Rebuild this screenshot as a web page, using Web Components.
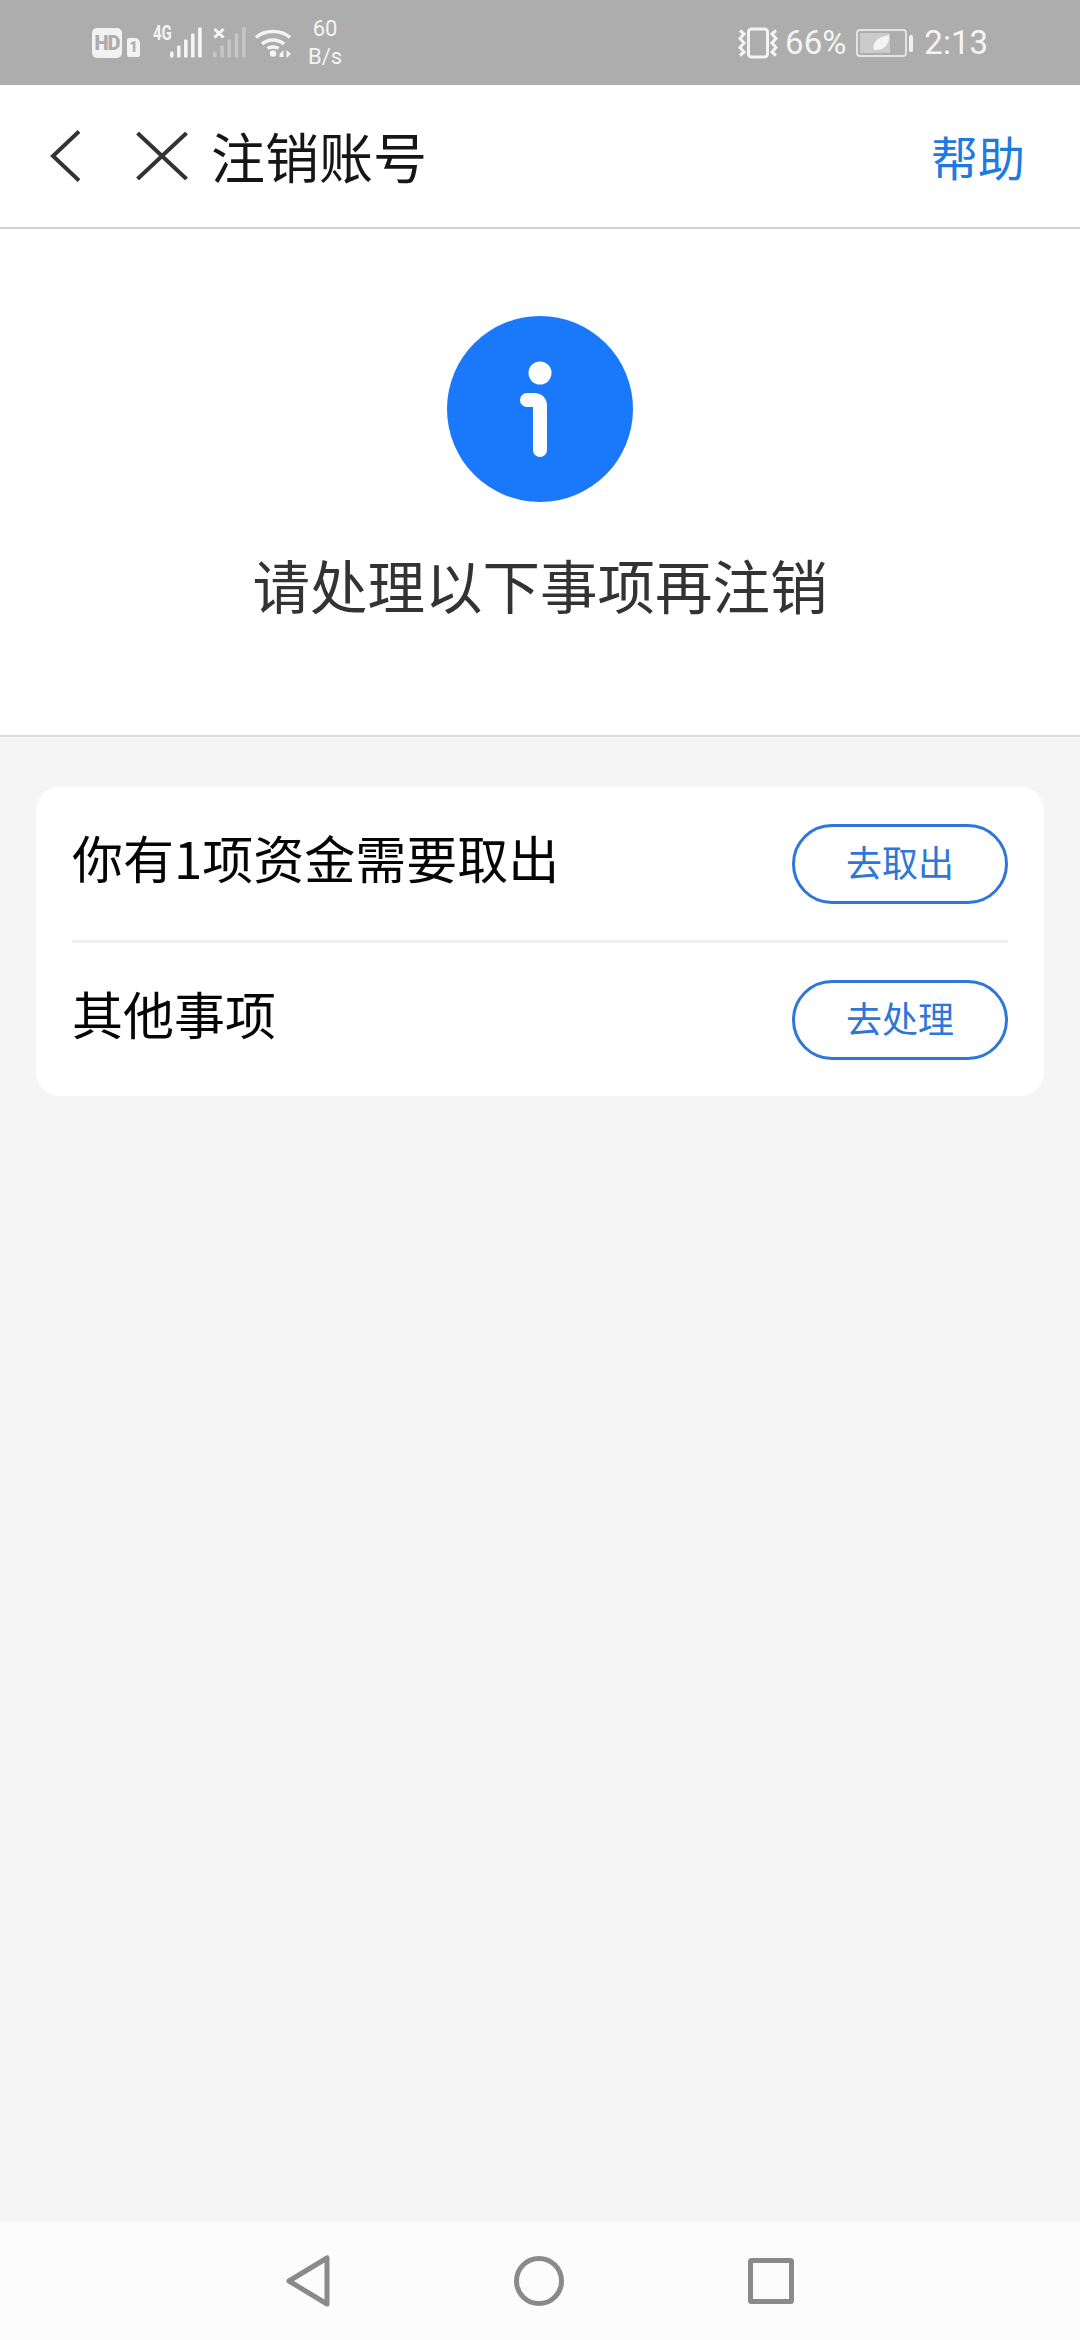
<!DOCTYPE html>
<html lang="zh">
<head>
<meta charset="utf-8">
<title>注销账号</title>
<style>
  html, body { margin: 0; padding: 0; }
  body { font-family: "Noto Sans CJK SC", "Liberation Sans", sans-serif; }
</style>
</head>
<body>
<account-page>
  <status-bar slot="status"></status-bar>
  <app-bar slot="header" heading="注销账号" action="帮助"></app-bar>
  <notice-hero slot="hero">请处理以下事项再注销</notice-hero>
  <todo-card slot="content">
    <todo-row action="去取出">你有1项资金需要取出</todo-row>
    <todo-row action="去处理" last>其他事项</todo-row>
  </todo-card>
  <nav-bar slot="nav"></nav-bar>
</account-page>

<script>
// Page shell
class AccountPage extends HTMLElement {
  constructor() {
    super();
    this.attachShadow({ mode: 'open' }).innerHTML = /*html*/`
      <style>
        :host {
          display: flex;
          flex-direction: column;
          width: 1080px;
          height: 2340px;
          overflow: hidden;
          background: #f5f5f5;
        }
        .content { flex: 1; padding: 50px 36px 0; }
      </style>
      <slot name="status"></slot>
      <slot name="header"></slot>
      <slot name="hero"></slot>
      <div class="content"><slot name="content"></slot></div>
      <slot name="nav"></slot>
    `;
  }
}

class StatusBar extends HTMLElement {
  constructor() {
    super();
    this.attachShadow({ mode: 'open' }).innerHTML = /*html*/`
      <style>
        :host {
          display: flex;
          align-items: center;
          height: 85px;
          padding: 0 92px 0 92px;
          box-sizing: border-box;
          background: #adadad;
          color: #f4f4f4;
          font-family: Roboto, "Liberation Sans", sans-serif;
        }
        svg { display: block; flex: none; }
        .hd {
          display: flex;
          align-items: center;
          justify-content: center;
          width: 30px;
          height: 30px;
          border-radius: 5px;
          background: #f2f2f2;
          color: #adadad;
          font-size: 20px;
          font-weight: 900;
          letter-spacing: -1px;
        }
        .sim {
          display: flex;
          align-items: center;
          justify-content: center;
          width: 13px;
          height: 19px;
          margin: 9px 0 0 5px;
          border-radius: 2px 5px 2px 2px;
          background: #f2f2f2;
          color: #adadad;
          font-size: 14px;
          font-weight: 900;
        }
        .net {
          align-self: flex-start;
          width: 19px;
          margin: 23px 0 0 13px;
          font-size: 20px;
          line-height: 20px;
          font-weight: 700;
          transform: scaleX(.75);
          transform-origin: left;
        }
        .speed {
          width: 50px;
          margin-left: 8px;
          font-size: 22px;
          line-height: 28px;
          text-align: center;
        }
        .pct { margin-left: 7px; font-size: 33px; }
        .time { margin-left: 10px; font-size: 33px; }
        .grow { flex: 1; }
      </style>
      <div class="hd">HD</div>
      <div class="sim">1</div>
      <div class="net">4G</div>
      <svg width="32" height="32" viewBox="0 0 32 32" fill="#f4f4f4" style="margin-left:-2px">
        <rect x="0" y="24.500" width="3.600" height="6" rx="1.500"/>
        <rect x="7" y="18.500" width="3.600" height="12" rx=".8"/>
        <rect x="14" y="12.500" width="3.600" height="18" rx=".8"/>
        <rect x="21" y="6.500" width="3.600" height="24" rx=".8"/>
        <rect x="28" y=".5" width="3.800" height="30" rx=".8"/>
      </svg>
      <svg width="34" height="32" viewBox="0 0 34 32" style="margin-left:10px">
        <path d="M2.500 2 11.500 10.500M11.500 2 2.500 10.500" stroke="#f4f4f4" stroke-width="3"/>
        <g fill="#f4f4f4" opacity=".35">
          <rect x="1" y="24.500" width="3.600" height="6" rx="1.500"/>
          <rect x="8.300" y="18.500" width="3.600" height="12" rx=".8"/>
          <rect x="15.500" y="12.500" width="3.600" height="18" rx=".8"/>
          <rect x="22.700" y="6.500" width="3.600" height="24" rx=".8"/>
          <rect x="30" y=".5" width="3.800" height="30" rx=".8"/>
        </g>
      </svg>
      <svg width="38" height="32" viewBox="0 0 38 32" fill="none" stroke="#f4f4f4" stroke-width="3.500" style="margin-left:8px">
        <path d="M2 10.500C11 2.500 27 2.500 36 10.500"/>
        <path d="M8 17C14 11.500 24 11.500 30 17"/>
        <circle cx="19" cy="26.500" r="3.200" fill="#f4f4f4" stroke="none"/>
        <path d="M13.500 21.500C16 19.500 22 19.500 24.500 21.500"/>
        <path d="M25.500 27l4-4v7H25.500zM32.500 23l4.500 4-4.500 4z" fill="#f4f4f4" stroke="none"/>
      </svg>
      <div class="speed">60<br>B/s</div>
      <div class="grow"></div>
      <svg width="40" height="32" viewBox="0 0 40 32" fill="none" stroke="#f4f4f4">
        <rect x="10.500" y="2" width="19" height="28" rx="3" stroke-width="3"/>
        <path d="M2 3.500l4 3.500-4 4.500 4 4.500-4 4.500 4 4.500-4 3.500M38 3.500l-4 3.500 4 4.500-4 4.500 4 4.500-4 4.500 4 3.500" stroke-width="3"/>
      </svg>
      <div class="pct">66%</div>
      <svg width="58" height="28" viewBox="0 0 58 28" style="margin-left:10px">
        <rect x="1" y="1" width="49" height="26" rx="3" fill="none" stroke="#e4e4e4" stroke-width="2"/>
        <rect x="4" y="4" width="30" height="20" fill="#cbcbcb"/>
        <rect x="53" y="6" width="4" height="17" rx="1.500" fill="#f0f0f0"/>
        <path d="M18 21C16 15 20 8 33 6C34 15 28 22 18 21Z" fill="#f4f4f4"/>
      </svg>
      <div class="time">2:13</div>
    `;
  }
}

class AppBar extends HTMLElement {
  constructor() {
    super();
    this.attachShadow({ mode: 'open' }).innerHTML = /*html*/`
      <style>
        :host {
          display: flex;
          align-items: center;
          height: 144px;
          padding: 0 55px 0 50px;
          box-sizing: border-box;
          background: #fff;
          border-bottom: 2px solid #d2d2d2;
        }
        svg { display: block; flex: none; }
        h1 {
          flex: 1;
          margin: 0 0 0 23px;
          color: #161616;
          font-size: 54px;
          font-weight: 400;
          line-height: 72px;
        }
        .action { color: #1f7ae0; font-size: 47px; line-height: 72px; }
      </style>
      <svg width="30" height="52" viewBox="0 0 30 52" fill="none" stroke="#333" stroke-width="4">
        <path d="M29 1.500 3 26l26 24.500"/>
      </svg>
      <svg width="52" height="48" viewBox="0 0 52 48" fill="none" stroke="#333" stroke-width="4" style="margin-left:56px">
        <path d="M1.500 1 50.500 47M50.500 1 1.500 47"/>
      </svg>
      <h1>${this.getAttribute('heading')}</h1>
      <span class="action">${this.getAttribute('action')}</span>
    `;
  }
}

class NoticeHero extends HTMLElement {
  constructor() {
    super();
    this.attachShadow({ mode: 'open' }).innerHTML = /*html*/`
      <style>
        :host {
          display: flex;
          flex-direction: column;
          align-items: center;
          height: 508px;
          padding-top: 87px;
          box-sizing: border-box;
          background: #fff;
          border-bottom: 2px solid #dcdcdc;
        }
        svg { display: block; }
        .text {
          margin-top: 42px;
          color: #333;
          font-size: 57.500px;
          line-height: 80px;
          white-space: nowrap;
        }
      </style>
      <svg width="186" height="186" viewBox="0 0 186 186">
        <circle cx="93" cy="93" r="93" fill="#1a78fa"/>
        <circle cx="93" cy="57" r="11.500" fill="#fff"/>
        <path d="M80 84H87Q93 84 93 90V134" fill="none" stroke="#fff" stroke-width="14" stroke-linecap="round"/>
      </svg>
      <div class="text"><slot></slot></div>
    `;
  }
}

class TodoCard extends HTMLElement {
  constructor() {
    super();
    this.attachShadow({ mode: 'open' }).innerHTML = /*html*/`
      <style>
        :host {
          display: block;
          padding: 0 36px;
          background: #fff;
          border-radius: 24px;
        }
      </style>
      <slot></slot>
    `;
  }
}

class TodoRow extends HTMLElement {
  constructor() {
    super();
    this.attachShadow({ mode: 'open' }).innerHTML = /*html*/`
      <style>
        :host {
          display: flex;
          align-items: center;
          justify-content: space-between;
          height: 153px;
          border-bottom: 3px solid #efefef;
          color: #050505;
          font-size: 51px;
        }
        :host([last]) { border-bottom: 0; }
        .label { margin-top: -13px; white-space: nowrap; }
      </style>
      <div class="label"><slot></slot></div>
      <action-button>${this.getAttribute('action')}</action-button>
    `;
  }
}

class ActionButton extends HTMLElement {
  constructor() {
    super();
    this.attachShadow({ mode: 'open' }).innerHTML = /*html*/`
      <style>
        :host {
          display: flex;
          align-items: center;
          justify-content: center;
          width: 216px;
          height: 80px;
          padding-bottom: 5px;
          box-sizing: border-box;
          border: 3px solid #2e77d8;
          border-radius: 40px;
          color: #2e77d8;
          font-size: 36px;
        }
      </style>
      <slot></slot>
    `;
  }
}

class NavBar extends HTMLElement {
  constructor() {
    super();
    this.attachShadow({ mode: 'open' }).innerHTML = /*html*/`
      <style>
        :host {
          display: flex;
          align-items: center;
          justify-content: center;
          gap: 184px;
          height: 118px;
          background: #fcfcfc;
        }
        svg { display: block; }
      </style>
      <svg width="44" height="52" viewBox="0 0 44 52" fill="none" stroke="#8a8a8a" stroke-width="5" stroke-linejoin="round">
        <path d="M41 3V49L3 26Z"/>
      </svg>
      <svg width="50" height="50" viewBox="0 0 50 50" fill="none" stroke="#8a8a8a" stroke-width="5">
        <circle cx="25" cy="25" r="22.500"/>
      </svg>
      <svg width="46" height="46" viewBox="0 0 46 46" fill="none" stroke="#8a8a8a" stroke-width="5" stroke-linejoin="round">
        <rect x="2.500" y="2.500" width="41" height="41" rx="1"/>
      </svg>
    `;
  }
}

customElements.define('account-page', AccountPage);
customElements.define('status-bar', StatusBar);
customElements.define('app-bar', AppBar);
customElements.define('notice-hero', NoticeHero);
customElements.define('action-button', ActionButton);
customElements.define('todo-card', TodoCard);
customElements.define('todo-row', TodoRow);
customElements.define('nav-bar', NavBar);
</script>
</body>
</html>
